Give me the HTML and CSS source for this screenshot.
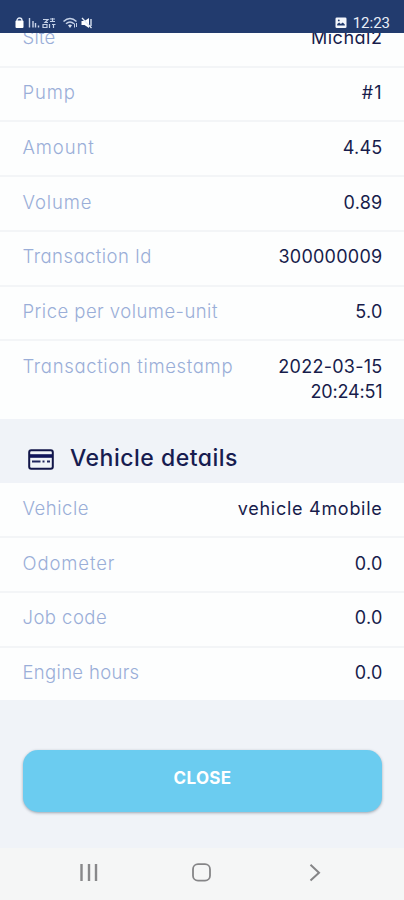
FILE: index.html
```
<!DOCTYPE html>
<html lang="en">
<head>
<meta charset="utf-8">
<title>Transaction details</title>
<link rel="stylesheet" href="styles.css">
</head>
<body>
<div class="screen">
  <header class="status">
    <div class="status-icons">
      <svg width="80" height="16" viewBox="0 0 80 16" fill="none">
        <path d="M2 7V5.500a2.500 2.500 0 0 1 5 0V7" stroke="#dfe7f5" stroke-width="1.300"/>
        <rect x="0.500" y="5.500" width="8" height="7.500" rx="1" fill="#fff"/>
        <path d="M14.500 3v9.500M18 6v6.500M20.500 8v4.500M23.500 10.500v2" stroke="#c9d4e9" stroke-width="1.400"/>
        <path d="M28 4.500h5l-3 3h3M35 4h5M35 6.500h5M37.500 3v4M28 9.500h4v3h-4zM34.500 9v4M37 9.500h3.500M38.500 9v4" stroke="#c5d1e7" stroke-width="1.200"/>
        <path d="M48.500 6.500q6.500-6 13 0M51 8.800q4-3.600 8 0" stroke="#c5d1e7" stroke-width="1.500"/>
        <path d="M53 10.300q2-1.600 4 0l-2 2.600z" fill="#d7e0f0"/>
        <path d="M59.500 8.500v4M61.500 8v4" stroke="#c5d1e7"/>
        <path d="M66.500 6h3l4.500-3v10l-4.500-3h-3z" fill="#fff"/>
        <path d="M67 3l9.500 10M76 4v7" stroke="#e6edf8" stroke-width="1.300"/>
      </svg>
    </div>
    <div class="status-right">
      <svg width="12" height="12" viewBox="0 0 12 12">
        <rect x="0.500" y="0.500" width="11" height="10.500" rx="1.300" fill="#f3f6fc"/>
        <path d="M2.200 8.500V7l2-1.500 1.600 1.400 2-1.500 2 2v1.100z" fill="#223b6e"/>
        <circle cx="3.800" cy="3.400" r="0.900" fill="#223b6e"/>
      </svg>
      <span class="clock">12:23</span>
    </div>
  </header>
  <main class="content">
    <section class="list list-transaction">
      <div class="row"><span class="label t-site">Site</span><span class="value t-wide">Michal2</span></div>
      <div class="row"><span class="label t-loose">Pump</span><span class="value t-hash">#1</span></div>
      <div class="row"><span class="label t-loose">Amount</span><span class="value">4.45</span></div>
      <div class="row"><span class="label t-loose">Volume</span><span class="value">0.89</span></div>
      <div class="row"><span class="label t-medium">Transaction Id</span><span class="value">300000009</span></div>
      <div class="row"><span class="label t-price">Price per volume-unit</span><span class="value">5.0</span></div>
      <div class="row"><span class="label t-stamp">Transaction timestamp</span><span class="value">2022-03-15<br><span class="t-time">20:24:51</span></span></div>
    </section>
    <h2 class="heading">
      <svg width="26" height="21" viewBox="0 0 26 21" fill="none">
        <rect x="1.200" y="1.200" width="23.600" height="18.600" rx="2" stroke="#121649" stroke-width="2"/>
        <path d="M2 7h22" stroke="#10145a" stroke-width="3.600"/>
        <path d="M4 12.500h8.500M14.500 12.500h2M19 12.500h3" stroke="#20265e" stroke-width="2"/>
      </svg>
      <span>Vehicle details</span>
    </h2>
    <section class="list list-vehicle">
      <div class="row"><span class="label">Vehicle</span><span class="value t-vehicle">vehicle 4mobile</span></div>
      <div class="row"><span class="label t-loose">Odometer</span><span class="value">0.0</span></div>
      <div class="row"><span class="label t-medium">Job code</span><span class="value">0.0</span></div>
      <div class="row"><span class="label t-engine">Engine hours</span><span class="value">0.0</span></div>
    </section>
    <button class="close" type="button">CLOSE</button>
  </main>
  <nav class="navbar">
    <svg width="20" height="20" viewBox="0 0 20 20"><path d="M2.500 1v17M10 1v17M17 1v17" stroke="#88888a" stroke-width="2.400"/></svg>
    <svg width="20" height="20" viewBox="0 0 20 20" fill="none"><rect x="1" y="1.200" width="17" height="16.500" rx="5" stroke="#858587" stroke-width="1.800"/></svg>
    <svg width="20" height="20" viewBox="0 0 20 20" fill="none"><path d="M5.500 1.800l8.500 7.900-8.500 7.900" stroke="#858587" stroke-width="2"/></svg>
  </nav>
</div>
</body>
</html>
```
FILE: styles.css
```
* { box-sizing: border-box; }

body { margin: 0; }

.screen {
  width: 404px;
  height: 900px;
  display: flex;
  flex-direction: column;
  overflow: hidden;
  background: #f0f3f8;
  font-family: Inter, "Liberation Sans", sans-serif;
  font-feature-settings: "cv11";
}

.status {
  flex: none;
  height: 33px;
  padding: 13px 14px 0 15px;
  display: flex;
  justify-content: space-between;
  background: #223b6e;
}

.status-icons { padding-top: 2px; }

.status-icons svg,
.status-right svg { display: block; }

.status-right {
  display: flex;
  gap: 6px;
}

.status-right svg { margin-top: 4px; }

.clock {
  color: #e9eef8;
  font: 400 15px/20px Roboto, sans-serif;
}

.content {
  flex: 1;
  min-height: 0;
  overflow: hidden;
}

.list { background: #fdfefe; }

.list-transaction { margin-top: -20.050px; }

.row {
  display: flex;
  justify-content: space-between;
  height: 54.750px;
  padding: 12.500px 21.500px 0 22.500px;
  border-bottom: 2px solid #f3f5f7;
  font-size: 18px;
  line-height: 25px;
}

.list .row:last-child {
  height: 52.750px;
  border-bottom: 0;
}

.list-transaction .row:last-child { height: 77.550px; }

.list-vehicle .row { padding-top: 12.700px; }

.label {
  color: #9aaed8;
  font-size: 18.500px;
  font-weight: 300;
  letter-spacing: 0.520px;
}

.value {
  color: #171c4b;
  font-weight: 430;
  letter-spacing: 0.260px;
  text-align: right;
}

.t-site { letter-spacing: 0.200px; }
.t-loose { letter-spacing: 0.880px; }
.t-medium { letter-spacing: 0.450px; }
.t-price { letter-spacing: 0.460px; }
.t-stamp { letter-spacing: 0.650px; }
.t-engine { letter-spacing: 0.320px; }
.t-wide { letter-spacing: 0.520px; }
.t-hash { letter-spacing: 1px; }
.t-time { letter-spacing: -0.150px; }
.t-vehicle { letter-spacing: 0.720px; }

.heading {
  display: flex;
  height: 64.300px;
  margin: 0;
  padding: 23px 0 0 28px;
  gap: 16px;
  color: #171c50;
  font-size: 23px;
  font-weight: 540;
  line-height: 32px;
  letter-spacing: 0.500px;
}

.heading svg { margin-top: 7px; }

.close {
  display: block;
  width: 359px;
  height: 62px;
  margin: 49.700px 0 0 23px;
  padding: 0 0 5px;
  border: 0;
  border-radius: 15px;
  background: #6bccf0;
  box-shadow: 0 1px 3px rgba(50, 70, 90, 0.450);
  color: #fff;
  font: 700 17px/24px Inter, sans-serif;
  letter-spacing: 0.300px;
}

.navbar {
  flex: none;
  display: flex;
  justify-content: space-between;
  height: 52px;
  padding: 15px 79px 0;
  background: #f5f6f6;
}
```
